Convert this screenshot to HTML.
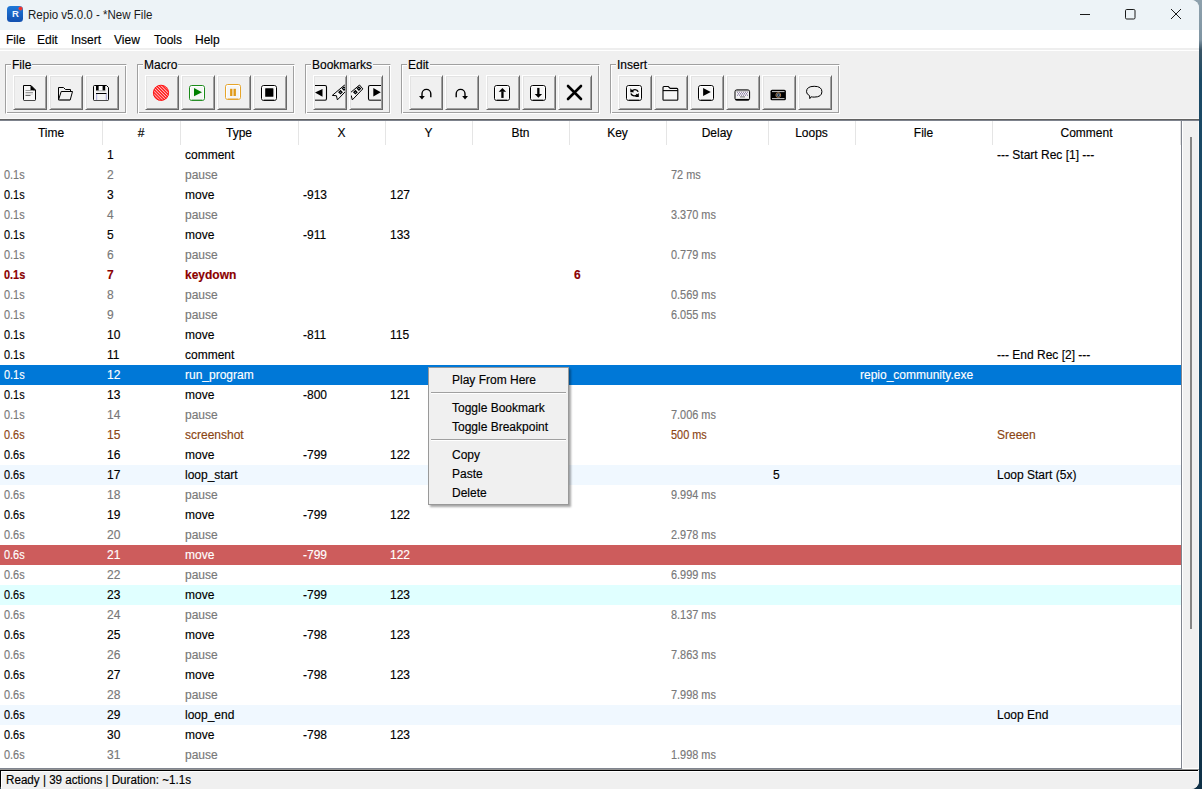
<!DOCTYPE html><html><head><meta charset="utf-8"><style>*{margin:0;padding:0;box-sizing:border-box}
html,body{width:1202px;height:789px;overflow:hidden;background:linear-gradient(#8ea1ad 0,#7f95a3 40px,#3a5566 50px,#1b4a66 80px,#174766 300px,#1d5273 500px,#123a52 700px,#0f3046);font-family:"Liberation Sans",sans-serif;font-size:12px;color:#000}
#desk{position:absolute;left:1199px;top:0;width:3px;height:789px;background:linear-gradient(#8ea1ad 0,#7f95a3 40px,#3a5566 50px,#1b4a66 80px,#174766 300px,#1d5273 500px,#123a52 700px,#0f3046)}
#win{position:absolute;left:0;top:0;width:1199px;height:789px;background:#f0f0f0;border-top-right-radius:8px;border-bottom-right-radius:8px;border-bottom-left-radius:3px;overflow:hidden}
#title{position:absolute;left:0;top:0;width:1199px;height:30px;background:#edf3f7}
#appicon{position:absolute;left:7px;top:6px;width:16px;height:16px;border-radius:3.5px;background:linear-gradient(#1f78d8,#1350b0)}
#appicon span{position:absolute;left:5px;top:3px;width:7px;text-align:center;color:#eef4ff;font-weight:bold;font-size:9.5px;line-height:9px;display:block}
#appicon i{position:absolute;left:11.5px;top:0.8px;width:3.6px;height:3.6px;border-radius:50%;background:#f0302a;box-shadow:0 0 0 0.6px #e05050}
#ttext{position:absolute;left:27.5px;top:7px;line-height:16px;font-size:12.5px;color:#1b1b1b;transform:scaleX(0.923);transform-origin:0 0;white-space:nowrap}
#tbtns{position:absolute;left:0;top:0}
#menu{position:absolute;left:0;top:30px;width:1199px;height:18px;background:#fff}
#menu span{position:absolute;top:2px;line-height:16px}
#menuline{position:absolute;left:0;top:48px;width:1199px;height:3px;border-top:2px solid #eeeeee;background:#fff;z-index:1}
#toolbar{position:absolute;left:0;top:50px;width:1199px;height:69px;background:#f0f0f0;border-bottom:1px solid #f8f8f8}
.grp{position:absolute;top:14px;height:50px;border:1px solid #a0a0a0;border-right-color:#fff;border-bottom-color:#fff;box-shadow:inset 1px 1px 0 #fff,inset -1px -1px 0 #a0a0a0}
.grp .lbl{position:absolute;top:-8px;left:5px;background:#f0f0f0;padding:0 1px;line-height:16px;color:#000}
.btn{position:absolute;top:25px;width:34px;height:35px;background:#f0f0f0;border:1px solid #fff;border-right-color:#696969;border-bottom-color:#696969;box-shadow:inset 1px 1px 0 #e3e3e3,inset -1px -1px 0 #a0a0a0;overflow:hidden}
.btn svg{position:absolute;left:-1px;top:-1px}
#table{position:absolute;left:0;top:121px;width:1182px;height:647px;background:#fff;overflow:hidden}
#thead{position:absolute;left:0;top:0;width:1181px;height:24px}
.th{position:absolute;top:3px;text-align:center;line-height:18px}
.sep{position:absolute;top:0;width:1px;height:24px;background:#e5e5e5}
.row{position:absolute;left:0;width:1181px;height:20px}
.td{position:absolute;top:0;line-height:20px;white-space:nowrap}
.g{color:#787878}
.k{color:#8b0000;font-weight:bold}
.b{color:#8b4513}
.sel{background:#0078d7;color:#fff}
.loop{background:#f0f8ff}
.bp{background:#cd5c5c;color:#fff}
.bm{background:#e0ffff}
#tborder{position:absolute;left:1181px;top:0;width:1px;height:647px;background:#80858f}
#sbar{position:absolute;left:1182px;top:121px;width:16px;height:647px;background:#f0f0f0;border-left:1px solid #fff}
#thumb{position:absolute;left:7px;top:16px;width:2px;height:492px;background:#858585}
#botline{position:absolute}
#status{position:absolute;left:0;top:769px;width:1199px;height:20px;background:#f0f0f0;border-top:1px solid #939393}
#status:after{content:"";position:absolute;left:0;top:0;width:1197px;height:30px;border-top:1px solid #000;border-left:1px solid #000;box-shadow:inset 1px 1px 0 #fff}
#status span{position:absolute;left:6px;top:2px;line-height:16px;font-size:12px;z-index:2;transform:scaleX(0.97);transform-origin:0 0;white-space:nowrap}
#tbottom{position:absolute;left:0;top:768px;width:1182px;height:1px;background:#80858f}
#sbot{position:absolute;left:1183px;top:768px;width:15px;height:1px;background:#fff}
#rcol{position:absolute;left:1198px;top:121px;width:1px;height:648px;background:#f8f8f8}
#ctx{position:absolute;left:428px;top:367px;width:141px;height:138px;background:#f0f0f0;border:1px solid #999;box-shadow:2px 2px 2px rgba(0,0,0,0.35)}
.mi{position:absolute;left:23px;line-height:19px;white-space:nowrap}
.ms{position:absolute;left:2px;width:135px;height:2px;border-top:1px solid #a0a0a0;background:#fff}
#tline{position:absolute;left:0;top:119px;width:1199px;height:2px;border-top:1px solid #626262;background:#7d828c}
.td,.th,#menu span,.mi,.lbl,#status span{-webkit-text-stroke:0.15px currentColor}
.sx{transform:scaleX(0.91);transform-origin:0 0}
</style></head><body>
<div id="win">
<div id="title"><div id="appicon"><span>R</span><i></i></div><div id="ttext">Repio v5.0.0 - *New File</div><svg id="tbtns" width="1202" height="30" viewBox="0 0 1202 30"><path d="M1080 14.5H1090" stroke="#1a1a1a" stroke-width="1" fill="none"/><rect x="1125.5" y="9.5" width="9.5" height="9.5" rx="1.2" stroke="#1a1a1a" stroke-width="1" fill="none"/><path d="M1171 9L1181 19M1181 9L1171 19" stroke="#1a1a1a" stroke-width="1" fill="none"/></svg></div>
<div id="menu">
<span style="left:6px">File</span>
<span style="left:37px">Edit</span>
<span style="left:71px">Insert</span>
<span style="left:114px">View</span>
<span style="left:154px">Tools</span>
<span style="left:195px">Help</span>
</div><div id="menuline"></div>
<div id="toolbar">
<div class="grp" style="left:5px;width:122px"><span class="lbl">File</span></div>
<div class="grp" style="left:137px;width:158px"><span class="lbl">Macro</span></div>
<div class="grp" style="left:305px;width:86px"><span class="lbl">Bookmarks</span></div>
<div class="grp" style="left:401px;width:199px"><span class="lbl">Edit</span></div>
<div class="grp" style="left:610px;width:230px"><span class="lbl">Insert</span></div>
<div class="btn" style="left:13px"></div>
<div class="btn" style="left:49px"></div>
<div class="btn" style="left:85px"></div>
<div class="btn" style="left:145px"></div>
<div class="btn" style="left:181px"></div>
<div class="btn" style="left:217px"></div>
<div class="btn" style="left:253px"></div>
<div class="btn" style="left:313px"></div>
<div class="btn" style="left:349px"></div>
<div class="btn" style="left:409px"></div>
<div class="btn" style="left:445px"></div>
<div class="btn" style="left:486px"></div>
<div class="btn" style="left:522px"></div>
<div class="btn" style="left:558px"></div>
<div class="btn" style="left:618px"></div>
<div class="btn" style="left:654px"></div>
<div class="btn" style="left:690px"></div>
<div class="btn" style="left:726px"></div>
<div class="btn" style="left:762px"></div>
<div class="btn" style="left:798px"></div>

</div>
<svg id="icons" width="1202" height="120" viewBox="0 0 1202 120" style="position:absolute;left:0;top:0">
<defs>
<pattern id="hatch" patternUnits="userSpaceOnUse" width="2.2" height="2.2" patternTransform="rotate(-45)">
<rect width="2.2" height="2.2" fill="#ff1a1a"/><rect x="0" y="0" width="0.9" height="2.2" fill="#ffc0c0"/>
</pattern>
<clipPath id="cb1"><rect x="315" y="77" width="30" height="31"/></clipPath>
<clipPath id="cb2"><rect x="351" y="77" width="30" height="31"/></clipPath>
</defs>
<!-- new file -->
<path d="M23.5 85.5H31L35.5 90V99.5Q35.5 100.5 34.5 100.5H24.5Q23.5 100.5 23.5 99.5Z" fill="#f6f6f6" stroke="#000" stroke-width="1"/>
<path d="M30.5 85L36 90.5H30.5Z" fill="#000"/>
<path d="M24 100.5H35" stroke="#4a4a4a" stroke-width="1"/>
<path d="M25.5 90.5H33M25.5 92.5H33" stroke="#9c9c9c" stroke-width="1"/>
<path d="M25.5 94H33" stroke="#cfcfcf" stroke-width="1.2"/>
<path d="M25.5 95.5H30.5" stroke="#6a6a6a" stroke-width="1"/>
<!-- open folder -->
<path d="M58.5 99.5V87.5H63.5L65.5 89.5H70.5V91.5" fill="none" stroke="#000" stroke-width="1"/>
<path d="M58.5 100L61.2 91.5H72.5L70.2 100Z" fill="#f2f2f2" stroke="#000" stroke-width="1" stroke-linejoin="round"/>
<path d="M59.5 100H70" stroke="#4a4a4a" stroke-width="1"/>
<!-- save -->
<path d="M94.5 85.5H106.5L108.5 87.5V99.5Q108.5 100.5 107.5 100.5H94.5Q93.5 100.5 93.5 99.5V86.5Q93.5 85.5 94.5 85.5Z" fill="#f4f4f4" stroke="#000" stroke-width="1"/>
<rect x="96" y="86" width="2.8" height="4.6" fill="#000"/>
<rect x="98.8" y="86" width="3.6" height="4.2" fill="#fff"/>
<rect x="102.6" y="86" width="2.6" height="4.6" fill="#000"/>
<path d="M96.5 90.8H105.5" stroke="#a0a0a0" stroke-width="0.8"/>
<path d="M96 93.5H106.5" stroke="#000" stroke-width="1"/>
<path d="M96.7 94V100M106.3 94V100" stroke="#9090d0" stroke-width="0.8"/>
<path d="M94 100.5H108" stroke="#4a4a4a" stroke-width="1"/>
<!-- record -->
<circle cx="161" cy="92.8" r="7.9" fill="url(#hatch)"/>
<circle cx="161" cy="92.8" r="7.6" fill="none" stroke="#ff0000" stroke-width="0.8"/>
<!-- play -->
<rect x="189.5" y="85.5" width="15" height="15" rx="2.2" fill="#f6f6f6" stroke="#1a8a1a" stroke-width="1"/><rect x="190.5" y="86.5" width="13" height="13" rx="1.2" fill="none" stroke="#fff" stroke-width="1"/><path d="M191.5 99.7H202.5" stroke="#7ab07a" stroke-width="0.8"/>
<path d="M194 88L202 92.2L194 96.3Z" fill="#008000"/>
<!-- pause -->
<rect x="225.5" y="84.5" width="15" height="15" rx="2.2" fill="#f6f6f6" stroke="#e6a52a" stroke-width="1"/><rect x="226.5" y="85.5" width="13" height="13" rx="1.2" fill="none" stroke="#fff" stroke-width="1"/><path d="M227.5 98.7H238.5" stroke="#e0b060" stroke-width="0.8"/>
<rect x="230.1" y="88.8" width="2.3" height="7.2" fill="#e09a18"/>
<rect x="233.5" y="88.8" width="2.4" height="7.2" fill="#e09a18"/>
<!-- stop -->
<rect x="261.5" y="85.5" width="15" height="15" rx="2.2" fill="#f6f6f6" stroke="#000" stroke-width="1"/><rect x="262.5" y="86.5" width="13" height="13" rx="1.2" fill="none" stroke="#fff" stroke-width="1"/><path d="M263.5 99.7H274.5" stroke="#666" stroke-width="0.8"/>
<rect x="265.2" y="88.2" width="8.2" height="8.6" rx="0.5" fill="#000"/>
<!-- bookmark prev -->
<g clip-path="url(#cb1)">
<path d="M305 85.5H325Q326.5 85.5 326.5 87V98.5Q326.5 100.3 325 100.3H305" fill="#f4f4f4" stroke="#000" stroke-width="1.1"/>
<path d="M305 100.3H325" stroke="#555" stroke-width="1"/>
<path d="M322.5 89L315 92.6L322.5 96.8Z" fill="#000"/>
<path d="M332.3 95.4L344.6 85L347.9 88.9L337.4 99.9L336.4 95.7Z" fill="#f6f6f6" stroke="#000" stroke-width="1" stroke-linejoin="round"/>
<path d="M340.5 90.7l1.5 1.5l-1.5 1.5l-1.5 -1.5Z M344 87.1l1.5 1.5l-1.5 1.5l-1.5 -1.5Z" fill="#cfe8f8" stroke="#000" stroke-width="1.3"/>
</g>
<!-- bookmark next -->
<g clip-path="url(#cb2)">
<path d="M347.2 95.4L359.5 85L362.8 88.9L352.3 99.9L351.3 95.7Z" fill="#f6f6f6" stroke="#000" stroke-width="1" stroke-linejoin="round"/>
<path d="M355.4 90.7l1.5 1.5l-1.5 1.5l-1.5 -1.5Z M358.9 87.1l1.5 1.5l-1.5 1.5l-1.5 -1.5Z" fill="#cfe8f8" stroke="#000" stroke-width="1.3"/>
<path d="M395 85.5H370Q368.5 85.5 368.5 87V98.5Q368.5 100.3 370 100.3H395" fill="#f4f4f4" stroke="#000" stroke-width="1.1"/>
<path d="M370 100.3H395" stroke="#555" stroke-width="1"/>
<path d="M373.3 88L380.8 92.3L373.3 96.5Z" fill="#000"/>
</g>
<!-- undo -->
<path d="M422 96V93.8A4.4 4.4 0 0 1 430.8 93.8V97.3" fill="none" stroke="#000" stroke-width="1.4"/>
<path d="M419 95.9H424.8L422 99.4Z" fill="#000"/>
<!-- redo -->
<g transform="translate(887 0) scale(-1 1)">
<path d="M422 96V93.8A4.4 4.4 0 0 1 430.8 93.8V97.3" fill="none" stroke="#000" stroke-width="1.4"/>
<path d="M419 95.9H424.8L422 99.4Z" fill="#000"/>
</g>
<!-- move up -->
<rect x="494.5" y="85.5" width="15" height="15" rx="2.2" fill="#f6f6f6" stroke="#000" stroke-width="1"/><rect x="495.5" y="86.5" width="13" height="13" rx="1.2" fill="none" stroke="#fff" stroke-width="1"/><path d="M496.5 99.7H507.5" stroke="#666" stroke-width="0.8"/>
<path d="M498.7 91.8L502.4 87.9L506.1 91.8Z" fill="#000"/>
<rect x="501.3" y="91.5" width="2.3" height="6.4" fill="#000"/>
<!-- move down -->
<rect x="530.5" y="85.5" width="15" height="15" rx="2.2" fill="#f6f6f6" stroke="#000" stroke-width="1"/><rect x="531.5" y="86.5" width="13" height="13" rx="1.2" fill="none" stroke="#fff" stroke-width="1"/><path d="M532.5 99.7H543.5" stroke="#666" stroke-width="0.8"/>
<path d="M534.7 94L538.4 97.7L542.1 94Z" fill="#000"/>
<rect x="537.2" y="87.9" width="2.3" height="6.4" fill="#000"/>
<!-- delete -->
<path d="M568 86L581 99M581 86L568 99" stroke="#000" stroke-width="2.6" stroke-linecap="round"/>
<!-- loop -->
<rect x="626.5" y="85.5" width="15" height="15" rx="2.2" fill="#f6f6f6" stroke="#000" stroke-width="1"/><rect x="627.5" y="86.5" width="13" height="13" rx="1.2" fill="none" stroke="#fff" stroke-width="1"/><path d="M628.5 99.7H639.5" stroke="#666" stroke-width="0.8"/>
<path d="M631.8 91.6A3.5 3.5 0 0 1 638.2 91.8" fill="none" stroke="#000" stroke-width="1.4"/>
<path d="M630.3 88.3V92.2H634.2Z" fill="#000"/>
<path d="M630.9 93.6A3.5 3.5 0 0 0 637.3 94" fill="none" stroke="#000" stroke-width="1.4"/>
<path d="M638.8 93V96.9H634.9Z" fill="#000"/>
<!-- folder -->
<path d="M663 99.5V87.5Q663 86.5 664 86.5H668.3L670.2 88.4H676.8Q677.8 88.4 677.8 89.4V99.5Q677.8 100.3 676.8 100.3H664Q663 100.3 663 99.5Z" fill="#f6f6f6" stroke="#000" stroke-width="1.1"/>
<path d="M663 90.6H677.8" stroke="#000" stroke-width="1.1"/>
<path d="M663.5 100.2H677" stroke="#555" stroke-width="1"/>
<!-- play box -->
<rect x="698.5" y="85.5" width="15" height="15" rx="2.2" fill="#f6f6f6" stroke="#000" stroke-width="1"/><rect x="699.5" y="86.5" width="13" height="13" rx="1.2" fill="none" stroke="#fff" stroke-width="1"/><path d="M700.5 99.7H711.5" stroke="#666" stroke-width="0.8"/>
<path d="M703.1 87.9L710.8 92L703.1 96.1Z" fill="#000"/>
<!-- keyboard -->
<rect x="735" y="89.9" width="14.6" height="10.2" rx="1.8" fill="#f2f2f2" stroke="#000" stroke-width="1"/>
<path d="M736 90.7H748.6" stroke="#7a7a7a" stroke-width="1.2"/>
<path d="M735.5 99.6H749" stroke="#000" stroke-width="1.4"/>
<path d="M737 92.3H748" stroke="#8a7aa0" stroke-width="1" stroke-dasharray="1 1"/>
<path d="M737 93.8H748" stroke="#6a5a8a" stroke-width="1" stroke-dasharray="1 1" stroke-dashoffset="1"/>
<path d="M737 95.2H748" stroke="#7a6a9a" stroke-width="1" stroke-dasharray="1 1"/>
<path d="M740 96.9H745" stroke="#707070" stroke-width="1"/>
<!-- camera -->
<rect x="770.5" y="89.7" width="15.4" height="10.6" rx="1.6" fill="#000"/>
<path d="M772 91.6H784.5M772 98.6H784.5" stroke="#c8c8c8" stroke-width="1"/>
<circle cx="778.3" cy="95.1" r="2.4" fill="none" stroke="#c09060" stroke-width="0.9"/>
<circle cx="778.3" cy="95.1" r="1.2" fill="none" stroke="#90b8e0" stroke-width="0.8"/>
<!-- speech -->
<path d="M809.6 95.7Q806.5 94.2 806.5 91.7Q806.5 86.3 814.2 86.3Q821.9 86.3 821.9 91.7Q821.9 97.1 814.2 97.1Q812.6 97.1 811.2 96.8L809.8 98.6Z" fill="none" stroke="#000" stroke-width="1" stroke-linejoin="round"/>
</svg>

<div id="tline"></div>
<div id="table">
<div id="thead">
<div class="th" style="left:0px;width:102px">Time</div>
<div class="th" style="left:102px;width:78px">#</div>
<div class="th" style="left:180px;width:118px">Type</div>
<div class="th" style="left:298px;width:87px">X</div>
<div class="th" style="left:385px;width:87px">Y</div>
<div class="th" style="left:472px;width:97px">Btn</div>
<div class="th" style="left:569px;width:97px">Key</div>
<div class="th" style="left:666px;width:102px">Delay</div>
<div class="th" style="left:768px;width:87px">Loops</div>
<div class="th" style="left:855px;width:137px">File</div>
<div class="th" style="left:992px;width:189px">Comment</div>
<div class="sep" style="left:102px"></div>
<div class="sep" style="left:180px"></div>
<div class="sep" style="left:298px"></div>
<div class="sep" style="left:385px"></div>
<div class="sep" style="left:472px"></div>
<div class="sep" style="left:569px"></div>
<div class="sep" style="left:666px"></div>
<div class="sep" style="left:768px"></div>
<div class="sep" style="left:855px"></div>
<div class="sep" style="left:992px"></div>
<div class="sep" style="left:1180px"></div>
</div>
<div class="row n" style="top:24px">
<div class="td" style="left:107px">1</div>
<div class="td" style="left:185px">comment</div>
<div class="td" style="left:997px">--- Start Rec [1] ---</div>
</div>
<div class="row g" style="top:44px">
<div class="td sx" style="left:4px">0.1s</div>
<div class="td" style="left:107px">2</div>
<div class="td" style="left:185px">pause</div>
<div class="td sx" style="left:671px">72 ms</div>
</div>
<div class="row n" style="top:64px">
<div class="td sx" style="left:4px">0.1s</div>
<div class="td" style="left:107px">3</div>
<div class="td" style="left:185px">move</div>
<div class="td" style="left:303px">-913</div>
<div class="td" style="left:390px">127</div>
</div>
<div class="row g" style="top:84px">
<div class="td sx" style="left:4px">0.1s</div>
<div class="td" style="left:107px">4</div>
<div class="td" style="left:185px">pause</div>
<div class="td sx" style="left:671px">3.370 ms</div>
</div>
<div class="row n" style="top:104px">
<div class="td sx" style="left:4px">0.1s</div>
<div class="td" style="left:107px">5</div>
<div class="td" style="left:185px">move</div>
<div class="td" style="left:303px">-911</div>
<div class="td" style="left:390px">133</div>
</div>
<div class="row g" style="top:124px">
<div class="td sx" style="left:4px">0.1s</div>
<div class="td" style="left:107px">6</div>
<div class="td" style="left:185px">pause</div>
<div class="td sx" style="left:671px">0.779 ms</div>
</div>
<div class="row k" style="top:144px">
<div class="td sx" style="left:4px">0.1s</div>
<div class="td" style="left:107px">7</div>
<div class="td" style="left:185px">keydown</div>
<div class="td" style="left:574px">6</div>
</div>
<div class="row g" style="top:164px">
<div class="td sx" style="left:4px">0.1s</div>
<div class="td" style="left:107px">8</div>
<div class="td" style="left:185px">pause</div>
<div class="td sx" style="left:671px">0.569 ms</div>
</div>
<div class="row g" style="top:184px">
<div class="td sx" style="left:4px">0.1s</div>
<div class="td" style="left:107px">9</div>
<div class="td" style="left:185px">pause</div>
<div class="td sx" style="left:671px">6.055 ms</div>
</div>
<div class="row n" style="top:204px">
<div class="td sx" style="left:4px">0.1s</div>
<div class="td" style="left:107px">10</div>
<div class="td" style="left:185px">move</div>
<div class="td" style="left:303px">-811</div>
<div class="td" style="left:390px">115</div>
</div>
<div class="row n" style="top:224px">
<div class="td sx" style="left:4px">0.1s</div>
<div class="td" style="left:107px">11</div>
<div class="td" style="left:185px">comment</div>
<div class="td" style="left:997px">--- End Rec [2] ---</div>
</div>
<div class="row sel" style="top:244px">
<div class="td sx" style="left:4px">0.1s</div>
<div class="td" style="left:107px">12</div>
<div class="td" style="left:185px">run_program</div>
<div class="td" style="left:860px">repio_community.exe</div>
</div>
<div class="row n" style="top:264px">
<div class="td sx" style="left:4px">0.1s</div>
<div class="td" style="left:107px">13</div>
<div class="td" style="left:185px">move</div>
<div class="td" style="left:303px">-800</div>
<div class="td" style="left:390px">121</div>
</div>
<div class="row g" style="top:284px">
<div class="td sx" style="left:4px">0.1s</div>
<div class="td" style="left:107px">14</div>
<div class="td" style="left:185px">pause</div>
<div class="td sx" style="left:671px">7.006 ms</div>
</div>
<div class="row b" style="top:304px">
<div class="td sx" style="left:4px">0.6s</div>
<div class="td" style="left:107px">15</div>
<div class="td" style="left:185px">screenshot</div>
<div class="td sx" style="left:671px">500 ms</div>
<div class="td" style="left:997px">Sreeen</div>
</div>
<div class="row n" style="top:324px">
<div class="td sx" style="left:4px">0.6s</div>
<div class="td" style="left:107px">16</div>
<div class="td" style="left:185px">move</div>
<div class="td" style="left:303px">-799</div>
<div class="td" style="left:390px">122</div>
</div>
<div class="row loop" style="top:344px">
<div class="td sx" style="left:4px">0.6s</div>
<div class="td" style="left:107px">17</div>
<div class="td" style="left:185px">loop_start</div>
<div class="td" style="left:773px">5</div>
<div class="td" style="left:997px">Loop Start (5x)</div>
</div>
<div class="row g" style="top:364px">
<div class="td sx" style="left:4px">0.6s</div>
<div class="td" style="left:107px">18</div>
<div class="td" style="left:185px">pause</div>
<div class="td sx" style="left:671px">9.994 ms</div>
</div>
<div class="row n" style="top:384px">
<div class="td sx" style="left:4px">0.6s</div>
<div class="td" style="left:107px">19</div>
<div class="td" style="left:185px">move</div>
<div class="td" style="left:303px">-799</div>
<div class="td" style="left:390px">122</div>
</div>
<div class="row g" style="top:404px">
<div class="td sx" style="left:4px">0.6s</div>
<div class="td" style="left:107px">20</div>
<div class="td" style="left:185px">pause</div>
<div class="td sx" style="left:671px">2.978 ms</div>
</div>
<div class="row bp" style="top:424px">
<div class="td sx" style="left:4px">0.6s</div>
<div class="td" style="left:107px">21</div>
<div class="td" style="left:185px">move</div>
<div class="td" style="left:303px">-799</div>
<div class="td" style="left:390px">122</div>
</div>
<div class="row g" style="top:444px">
<div class="td sx" style="left:4px">0.6s</div>
<div class="td" style="left:107px">22</div>
<div class="td" style="left:185px">pause</div>
<div class="td sx" style="left:671px">6.999 ms</div>
</div>
<div class="row bm" style="top:464px">
<div class="td sx" style="left:4px">0.6s</div>
<div class="td" style="left:107px">23</div>
<div class="td" style="left:185px">move</div>
<div class="td" style="left:303px">-799</div>
<div class="td" style="left:390px">123</div>
</div>
<div class="row g" style="top:484px">
<div class="td sx" style="left:4px">0.6s</div>
<div class="td" style="left:107px">24</div>
<div class="td" style="left:185px">pause</div>
<div class="td sx" style="left:671px">8.137 ms</div>
</div>
<div class="row n" style="top:504px">
<div class="td sx" style="left:4px">0.6s</div>
<div class="td" style="left:107px">25</div>
<div class="td" style="left:185px">move</div>
<div class="td" style="left:303px">-798</div>
<div class="td" style="left:390px">123</div>
</div>
<div class="row g" style="top:524px">
<div class="td sx" style="left:4px">0.6s</div>
<div class="td" style="left:107px">26</div>
<div class="td" style="left:185px">pause</div>
<div class="td sx" style="left:671px">7.863 ms</div>
</div>
<div class="row n" style="top:544px">
<div class="td sx" style="left:4px">0.6s</div>
<div class="td" style="left:107px">27</div>
<div class="td" style="left:185px">move</div>
<div class="td" style="left:303px">-798</div>
<div class="td" style="left:390px">123</div>
</div>
<div class="row g" style="top:564px">
<div class="td sx" style="left:4px">0.6s</div>
<div class="td" style="left:107px">28</div>
<div class="td" style="left:185px">pause</div>
<div class="td sx" style="left:671px">7.998 ms</div>
</div>
<div class="row loop" style="top:584px">
<div class="td sx" style="left:4px">0.6s</div>
<div class="td" style="left:107px">29</div>
<div class="td" style="left:185px">loop_end</div>
<div class="td" style="left:997px">Loop End</div>
</div>
<div class="row n" style="top:604px">
<div class="td sx" style="left:4px">0.6s</div>
<div class="td" style="left:107px">30</div>
<div class="td" style="left:185px">move</div>
<div class="td" style="left:303px">-798</div>
<div class="td" style="left:390px">123</div>
</div>
<div class="row g" style="top:624px">
<div class="td sx" style="left:4px">0.6s</div>
<div class="td" style="left:107px">31</div>
<div class="td" style="left:185px">pause</div>
<div class="td sx" style="left:671px">1.998 ms</div>
</div>
<div id="tborder"></div>
</div>
<div id="sbar"><div id="thumb"></div></div><div id="tbottom"></div><div id="sbot"></div><div id="rcol"></div>
<div id="status"><span>Ready | 39 actions | Duration: ~1.1s</span></div>
<div id="ctx"><div class="mi" style="top:3px">Play From Here</div><div class="ms" style="top:24px"></div><div class="mi" style="top:31px">Toggle Bookmark</div><div class="mi" style="top:50px">Toggle Breakpoint</div><div class="ms" style="top:71px"></div><div class="mi" style="top:78px">Copy</div><div class="mi" style="top:97px">Paste</div><div class="mi" style="top:116px">Delete</div></div>
</div>
<div id="desk"></div>
</body></html>
